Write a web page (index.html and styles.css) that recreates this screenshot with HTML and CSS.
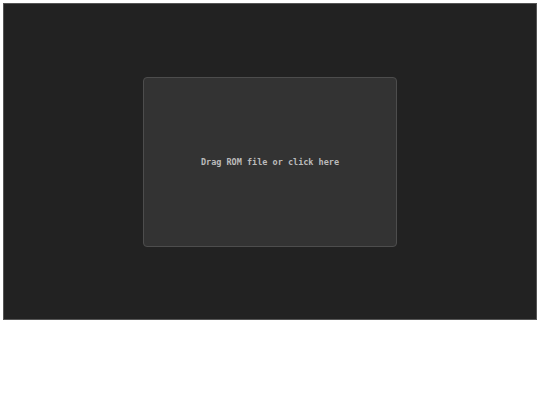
FILE: index.html
```html
<!DOCTYPE html>
<html>
<head>
<meta charset="utf-8">
<link rel="stylesheet" href="styles.css">
</head>
<body>
<div class="screen">
  <div class="drop">Drag ROM file or click here</div>
</div>
</body>
</html>
```
FILE: styles.css
```css
html, body { margin: 0; padding: 0; background: #fff; }
body { padding: 3px; }
.screen {
  width: 532px;
  height: 315px;
  background: #222;
  border: 1px solid #555;
  display: flex;
  align-items: center;
  justify-content: center;
}
.drop {
  width: 252px;
  height: 168px;
  background: #333;
  border: 1px solid #4d4d4d;
  border-radius: 4px;
  display: flex;
  align-items: center;
  justify-content: center;
  font-family: "DejaVu Sans Mono", monospace;
  font-weight: bold;
  font-size: 8.5px;
  color: #bbb;
}
```
